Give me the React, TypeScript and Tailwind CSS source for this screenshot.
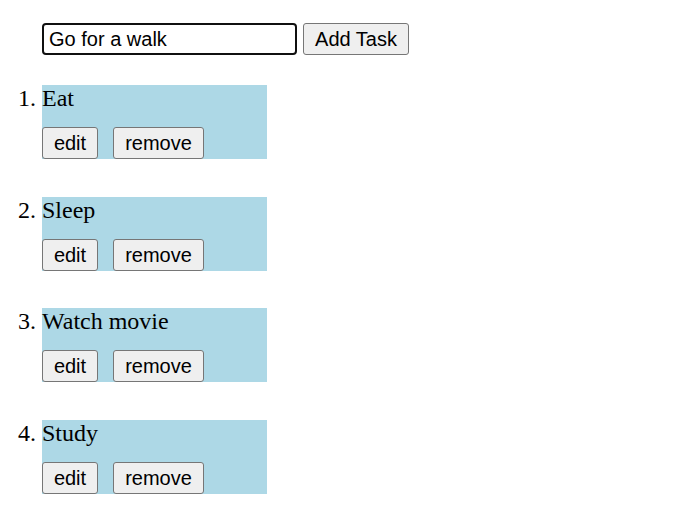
import React from 'react';

const tasks = ['Eat', 'Sleep', 'Watch movie', 'Study'];

const btn = "h-[32px] bg-[#efefef] border border-[#767676] rounded-[3px] text-[20px] text-black font-['Liberation_Sans',Arial,sans-serif] leading-none";

export default function App() {
  return <div className="min-h-screen bg-white text-black pt-[23px] pl-[42px] font-['Liberation_Serif','Times_New_Roman',serif]">
      <div className="flex items-start">
        <input
          className="w-[255px] h-[32px] border-2 border-[#101010] rounded-[4px] px-[5px] text-[20px] text-black outline-none font-['Liberation_Sans',Arial,sans-serif]"
          defaultValue="Go for a walk"
        />
        <button className={`${btn} ml-[6px] w-[106px]`}>Add Task</button>
      </div>
      <ol className="list-decimal mt-[30px] flex flex-col gap-[37.7px] text-[24px]">
        {tasks.map(task => <li key={task} className="w-[225px] h-[74px] bg-[#add8e6] leading-[27px]">
            <div>{task}</div>
            <div className="flex gap-[15px] mt-[15px]">
              <button className={`${btn} w-[56px]`}>edit</button>
              <button className={`${btn} w-[91px]`}>remove</button>
            </div>
          </li>)}
      </ol>
    </div>;
}
